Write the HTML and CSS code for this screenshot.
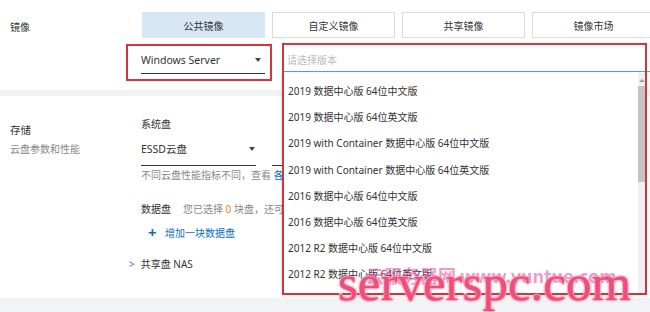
FILE: index.html
```html
<!DOCTYPE html>
<html>
<head>
  <link rel="stylesheet" href="styles.css">
</head>
<body>
  <div class="page">
    <div class="section image">
      <div class="label">镜像</div>
      <div class="content">
        <div class="tabs">
          <div class="tab active">公共镜像</div>
          <div class="tab">自定义镜像</div>
          <div class="tab">共享镜像</div>
          <div class="tab">镜像市场</div>
        </div>
        <div class="selects">
          <div class="os-box">
            <div class="select os">
              <span>Windows Server</span>
              <span class="caret"></span>
            </div>
          </div>
          <div class="version">
            <div class="version-input">请选择版本</div>
            <div class="dropdown">
              <div class="items">
                <div class="item">2019 数据中心版 64位中文版</div>
                <div class="item">2019 数据中心版 64位英文版</div>
                <div class="item">2019 with Container 数据中心版 64位中文版</div>
                <div class="item">2019 with Container 数据中心版 64位英文版</div>
                <div class="item">2016 数据中心版 64位中文版</div>
                <div class="item">2016 数据中心版 64位英文版</div>
                <div class="item">2012 R2 数据中心版 64位中文版</div>
                <div class="item">2012 R2 数据中心版 64位英文版</div>
              </div>
              <div class="scrollbar">
                <span class="arrow up"></span>
                <div class="thumb"></div>
              </div>
            </div>
            <div class="mark"></div>
          </div>
        </div>
      </div>
    </div>
    <div class="band"></div>
    <div class="section storage">
      <div class="label">
        <div class="title">存储</div>
        <div class="sub">云盘参数和性能</div>
      </div>
      <div class="content disks">
        <div class="disk-title">系统盘</div>
        <div class="disk-row">
          <div class="select essd">
            <span>ESSD云盘</span>
            <span class="caret"></span>
          </div>
          <div class="select size"></div>
        </div>
        <div class="hint">不同云盘性能指标不同，查看 <span class="link">各</span></div>
        <div class="data-row">
          <span class="data-title">数据盘</span>
          <span class="hint">您已选择 <span class="num">0</span> 块盘，还可</span>
        </div>
        <div class="add"><span class="plus">+</span><span class="link">增加一块数据盘</span></div>
        <div class="nas"><span class="chev">&gt;</span>共享盘 NAS</div>
      </div>
    </div>
    <div class="band bottom"></div>
  </div>
  <div class="watermark">
    <div class="wm-small">云服务器网 www.yuntue.com</div>
    <div class="wm-big">serverspc.com</div>
  </div>
</body>
</html>
```

FILE: styles.css
```css
body {
  margin: 0;
  background-color: #fff;
  font-family: "Noto Sans", "Noto Sans CJK SC", sans-serif;
  font-size: 10px;
  color: #333;
  width: 650px;
  height: 312px;
  overflow: hidden;
  position: relative;
}

.page {
  display: flex;
  flex-direction: column;
}

.section {
  display: flex;
}

.label {
  width: 126px;
  flex-shrink: 0;
  padding-left: 10px;
  box-sizing: border-box;
}

.image {
  height: 90px;
}

.image .label {
  padding-top: 19px;
}

.tabs {
  display: flex;
  gap: 7px;
  margin: 12px 0 0 16px;
}

.tab {
  width: 123px;
  height: 26px;
  flex-shrink: 0;
  border: 1px solid #dcdcdc;
  box-sizing: border-box;
  display: flex;
  align-items: center;
  justify-content: center;
}

.tab.active {
  background-color: #d7e7f5;
  border-color: #d7e7f5;
}

.selects {
  display: flex;
  margin-top: 6px;
}

.os-box {
  width: 146px;
  height: 37px;
  border: 2px solid #d2353d;
  box-sizing: border-box;
  padding: 0 5px 0 13px;
}

.select {
  display: flex;
  align-items: center;
  justify-content: space-between;
  border-bottom: 1px solid #333;
  box-sizing: border-box;
}

.os {
  height: 28px;
  font-size: 10.5px;
  padding-right: 4px;
}

.caret {
  width: 0;
  height: 0;
  border-left: 3.5px solid transparent;
  border-right: 3.5px solid transparent;
  border-top: 4px solid #444;
}

.version {
  position: relative;
  margin-left: 10px;
  width: 369px;
}

.version-input {
  height: 28px;
  padding: 3px 0 0 5px;
  box-sizing: border-box;
  display: flex;
  align-items: center;
  color: #bbb;
  border-bottom: 1px solid #5aa6b3;
}

.dropdown {
  position: absolute;
  left: 0;
  top: 29px;
  width: 363px;
  height: 221px;
  background-color: #fff;
  box-shadow: 0 1px 4px rgba(0, 0, 0, 0.15);
  display: flex;
  overflow: hidden;
  z-index: 2;
}

.items {
  flex: 1;
  padding-top: 5px;
}

.item {
  height: 26.2px;
  line-height: 26.2px;
  padding-left: 6px;
  white-space: nowrap;
}

.scrollbar {
  width: 7px;
  background-color: #f0f0f0;
  display: flex;
  flex-direction: column;
  align-items: center;
}

.arrow.up {
  margin-top: 6px;
  width: 0;
  height: 0;
  border-left: 3px solid transparent;
  border-right: 3px solid transparent;
  border-bottom: 3px solid #a0a0a0;
}

.thumb {
  margin-top: 4px;
  width: 7px;
  height: 96px;
  background-color: #c4c4c4;
}

.mark {
  position: absolute;
  left: 0;
  top: -1px;
  width: 365px;
  height: 252px;
  border: 2px solid #d2353d;
  box-sizing: border-box;
  z-index: 3;
}

.band {
  height: 6px;
  background-color: #f2f3f5;
}

.band.bottom {
  margin-top: 7px;
  height: 20px;
}

.storage {
  height: 195px;
}

.storage .label {
  padding-top: 26px;
}

.title {
  font-size: 10.5px;
}

.sub {
  margin-top: 4px;
  color: #888;
}

.disks {
  padding: 20px 0 0 15px;
}

.disk-row {
  display: flex;
  gap: 16px;
  margin-top: 6px;
}

.essd {
  width: 115px;
  height: 29px;
  padding: 0 1px 5px 0;
  font-size: 10.5px;
}

.size {
  width: 40px;
}

.hint {
  color: #888;
  margin-top: 1px;
  white-space: nowrap;
}

.link {
  color: #0a6fc2;
}

.num {
  color: #f47a20;
}

.data-row {
  display: flex;
  gap: 12px;
  margin-top: 19px;
}

.data-row .hint {
  margin-top: 0;
}

.add {
  margin: 8px 0 0 7px;
  display: flex;
  align-items: center;
}

.plus {
  color: #0a6fc2;
  font-size: 15px;
  font-weight: bold;
  width: 17px;
  line-height: 16px;
}

.nas {
  margin: 16px 0 0 -12px;
}

.chev {
  color: #666;
  margin-right: 6px;
}

.watermark {
  position: absolute;
  left: 338px;
  top: 258px;
  z-index: 5;
}

.wm-small {
  position: absolute;
  left: 28px;
  top: 4px;
  font-size: 18px;
  font-weight: bold;
  white-space: nowrap;
  color: rgba(226, 70, 160, 0.55);
  font-family: "Noto Sans CJK SC", sans-serif;
}

.wm-big {
  position: relative;
  font-family: "Liberation Serif", serif;
  font-size: 51px;
  line-height: 51px;
  color: #ef4e7a;
  -webkit-text-stroke: 1.5px #fff;
  paint-order: stroke fill;
  text-shadow: 0 0 3px #f07090, 0 0 2px #e04070;
  white-space: nowrap;
}
```
